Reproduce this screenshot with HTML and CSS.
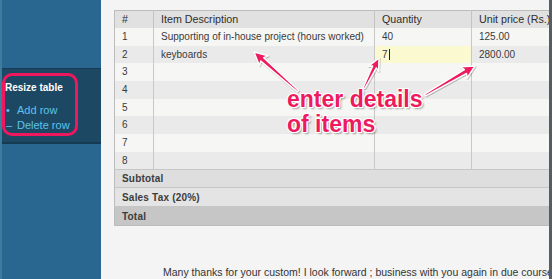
FILE: index.html
```html
<!DOCTYPE html>
<html>
<head>
<meta charset="utf-8">
<link rel="stylesheet" href="styles.css">
</head>
<body>
<div class="page">
  <aside class="sidebar">
    <div class="side-top"></div>
    <div class="side-box">
      <div class="side-title">Resize table</div>
      <ul class="side-links">
        <li><span class="mark">•</span>Add row</li>
        <li><span class="mark">–</span>Delete row</li>
      </ul>
    </div>
    <div class="side-bottom"></div>
  </aside>
  <main class="main">
    <table class="items">
      <colgroup>
        <col class="c-num"><col class="c-desc"><col class="c-qty"><col class="c-price">
      </colgroup>
      <thead>
        <tr class="head"><th>#</th><th>Item Description</th><th>Quantity</th><th>Unit price (Rs.)</th></tr>
      </thead>
      <tbody>
        <tr class="odd h18"><td>1</td><td>Supporting of in-house project (hours worked)</td><td>40</td><td>125.00</td></tr>
        <tr class="even h17"><td>2</td><td>keyboards</td><td class="active">7<span class="caret"></span></td><td>2800.00</td></tr>
        <tr class="odd h18"><td>3</td><td></td><td></td><td></td></tr>
        <tr class="even h18"><td>4</td><td></td><td></td><td></td></tr>
        <tr class="odd h17"><td>5</td><td></td><td></td><td></td></tr>
        <tr class="even h18"><td>6</td><td></td><td></td><td></td></tr>
        <tr class="odd h18"><td>7</td><td></td><td></td><td></td></tr>
        <tr class="even h18"><td>8</td><td></td><td></td><td></td></tr>
        <tr class="sum sub"><td colspan="4">Subtotal</td></tr>
        <tr class="sum tax"><td colspan="4">Sales Tax (20%)</td></tr>
        <tr class="sum total"><td colspan="4">Total</td></tr>
      </tbody>
    </table>
    <p class="thanks">Many thanks for your custom! I look forward ; business with you again in due course.</p>
  </main>
  <div class="edge"></div>
</div>

<div class="ring"></div>

<svg class="arrows" width="552" height="279" viewBox="0 0 552 279">
  <defs>
    <filter id="sh" x="-20%" y="-20%" width="140%" height="140%">
      <feDropShadow dx="0.6" dy="0.8" stdDeviation="0.7" flood-color="#000" flood-opacity="0.35"/>
    </filter>
  </defs>
  <g filter="url(#sh)" fill="#ee1a5e" stroke="#fff" stroke-width="1.4" stroke-linejoin="round">
    <g transform="translate(254 52) rotate(41.6)">
      <polygon points="0,0 13,-6.5 11,-2.2 58.8,-0.9 58.8,0.9 11,2.2 13,6.5"/>
    </g>
    <g transform="translate(379 58) rotate(116.6)">
      <polygon points="0,0 12,-5.5 10,-2 33.5,-0.9 33.5,0.9 10,2 12,5.5"/>
    </g>
    <g transform="translate(475 66) rotate(149.9)">
      <polygon points="0,0 13,-6.5 11,-2.2 57.8,-0.9 57.8,0.9 11,2.2 13,6.5"/>
    </g>
  </g>
</svg>

<div class="note">enter details<br>of items</div>
</body>
</html>
```

FILE: styles.css
```css
* { box-sizing: border-box; }
html, body { margin: 0; padding: 0; }
body {
  width: 552px;
  height: 279px;
  overflow: hidden;
  position: relative;
  font-family: "Liberation Sans", Arial, sans-serif;
  background: #2b6891;
}
.page {
  display: flex;
  height: 279px;
}
.sidebar {
  width: 101px;
  flex: none;
  display: flex;
  flex-direction: column;
  background: #2a6790;
  border-left: 2px solid #3c7d9f;
}
.side-top { height: 68px; }
.side-box {
  height: 76px;
  background: #1d4864;
  border-top: 1px solid #163a52;
  border-bottom: 2px solid #163a52;
  padding: 13px 0 0 3px;
}
.side-bottom { flex: 1; }
.side-title {
  color: #ffffff;
  font-weight: bold;
  font-size: 10px;
  line-height: 12px;
}
.side-links {
  list-style: none;
  margin: 9px 0 0 0;
  padding: 0;
  color: #5ec3ec;
  font-size: 11px;
  line-height: 15px;
}
.side-links .mark {
  display: inline-block;
  width: 12px;
  padding-left: 1px;
}
.main {
  flex: 1;
  background: #f3f4f3;
  overflow: hidden;
  padding: 10px 0 0 13px;
  min-width: 0;
}
.edge {
  width: 3px;
  flex: none;
  background: #575c60;
}
.items {
  border-collapse: collapse;
  table-layout: fixed;
  width: 460px;
  font-size: 10px;
  color: #3a3a3a;
  border: 1px solid #bcbcbc;
}
.c-num { width: 39px; }
.c-desc { width: 221px; }
.c-qty { width: 97px; }
.c-price { width: 103px; }
.items th, .items td {
  padding: 0 0 0 7px;
  text-align: left;
  white-space: nowrap;
  overflow: hidden;
}
.items th {
  font-weight: normal;
  font-size: 10.7px;
  color: #2e2e2e;
  height: 17px;
  background: #e1e1e1;
  border-left: 1px solid #c3c3c3;
}
.items th:first-child, .items tbody tr td:first-child { border-left: none; }
.items tbody td { border-left: 1px solid #c8c8c8; font-size: 10px; }
.items tbody td:first-child { padding-left: 7px; }
.h18 td { height: 18px; }
.h17 td { height: 17px; }
.odd td { background: #f6f6f5; }
.even td { background: #eaeaea; }
.items td.active { background: #fbf9cf; }
.caret {
  display: inline-block;
  width: 1px;
  height: 11px;
  background: #222;
  vertical-align: -2px;
  margin-left: 1px;
}
.items .sum td {
  font-weight: bold;
  font-size: 10px;
  letter-spacing: 0.2px;
  color: #3c3c3c;
  padding-left: 8px;
  border-top: 1px solid #c6c6c6;
}
.sub td { height: 18px; background: #dedede; }
.tax td { height: 19px; background: #e4e4e4; }
.items .total td { height: 19px; background: #c6c6c6; padding-left: 7px; }
.thanks {
  margin: 40px 0 0 49px;
  font-size: 10.5px;
  line-height: 13px;
  color: #333;
  white-space: nowrap;
}
.ring {
  position: absolute;
  left: 2px;
  top: 73px;
  width: 76px;
  height: 63px;
  border: 3px solid #ef175d;
  border-radius: 10px;
}
.arrows {
  position: absolute;
  left: 0;
  top: 0;
  pointer-events: none;
}
.note {
  position: absolute;
  left: 287px;
  top: 87px;
  font-size: 23px;
  line-height: 25px;
  font-weight: bold;
  color: #ee1a5e;
  white-space: nowrap;
  text-shadow:
    1px 0 0 #fff, -1px 0 0 #fff, 0 1px 0 #fff, 0 -1px 0 #fff,
    1px 1px 0 #fff, -1px -1px 0 #fff, 1px -1px 0 #fff, -1px 1px 0 #fff,
    2px 2px 2px rgba(0,0,0,0.35);
}
```
